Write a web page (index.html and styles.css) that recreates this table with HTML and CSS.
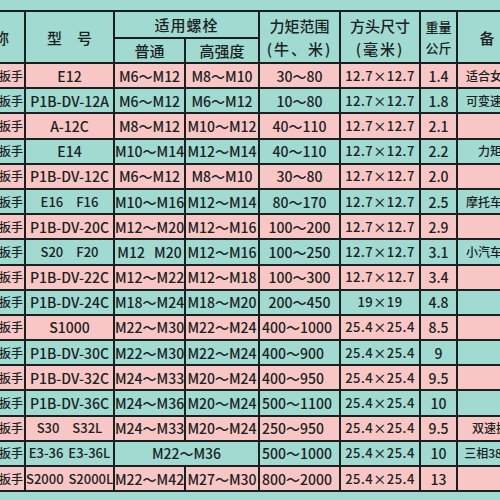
FILE: index.html
```
<!DOCTYPE html>
<html lang="zh-CN">
  <head>
    <meta charset="UTF-8" />
    <meta name="viewport" content="width=device-width, initial-scale=1.0" />
    <title>电动扳手参数表</title>
    <link rel="stylesheet" href="styles.css">
  </head>
  <body>
    <table class="spec-table">
      <colgroup>
        <col class="c-name" />
        <col class="c-model" />
        <col class="c-bolt" />
        <col class="c-bolt2" />
        <col class="c-torque" />
        <col class="c-square" />
        <col class="c-weight" />
        <col class="c-note" />
      </colgroup>
      <thead>
        <tr class="head-top">
          <th rowspan="2">名称</th>
          <th rowspan="2">型　号</th>
          <th colspan="2" class="wide">适用螺栓</th>
          <th rowspan="2">力矩范围<br /><span class="unit">(牛、米)</span></th>
          <th rowspan="2">方头尺寸<br /><span class="unit">(毫米)</span></th>
          <th rowspan="2" class="small">重量<br />公斤</th>
          <th rowspan="2">备　注</th>
        </tr>
        <tr class="head-sub">
          <th>普通</th>
          <th>高强度</th>
        </tr>
      </thead>
      <tbody>
        <tr class="pink">
          <td class="name">电动扳手</td><td>E12</td><td>M6～M12</td><td>M8～M10</td>
          <td>30～80</td><td class="sq">12.7×12.7</td><td>1.4</td><td class="note">适合女士使用</td>
        </tr>
        <tr class="teal">
          <td class="name">电动扳手</td><td>P1B-DV-12A</td><td>M6～M12</td><td>M6～M12</td>
          <td>10～80</td><td class="sq">12.7×12.7</td><td>1.8</td><td class="note">可变速手动型</td>
        </tr>
        <tr class="pink">
          <td class="name">电动扳手</td><td>A-12C</td><td>M8～M12</td><td>M10～M12</td>
          <td>40～110</td><td class="sq">12.7×12.7</td><td>2.1</td><td class="note"></td>
        </tr>
        <tr class="teal">
          <td class="name">电动扳手</td><td>E14</td><td>M10～M14</td><td>M12～M14</td>
          <td>40～110</td><td class="sq">12.7×12.7</td><td>2.2</td><td class="note">力矩可调</td>
        </tr>
        <tr class="pink">
          <td class="name">电动扳手</td><td>P1B-DV-12C</td><td>M6～M12</td><td>M8～M10</td>
          <td>30～80</td><td class="sq">12.7×12.7</td><td>2.0</td><td class="note"></td>
        </tr>
        <tr class="teal">
          <td class="name">电动扳手</td><td class="pair">E16　F16</td><td>M10～M16</td><td>M12～M14</td>
          <td>80～170</td><td class="sq">12.7×12.7</td><td>2.5</td><td class="note">摩托车维修用</td>
        </tr>
        <tr class="pink">
          <td class="name">电动扳手</td><td>P1B-DV-20C</td><td>M12～M20</td><td>M12～M16</td>
          <td>100～200</td><td class="sq">12.7×12.7</td><td>2.9</td><td class="note"></td>
        </tr>
        <tr class="teal">
          <td class="name">电动扳手</td><td class="pair">S20　F20</td><td class="gap">M12 M20</td><td>M12～M16</td>
          <td>100～250</td><td class="sq">12.7×12.7</td><td>3.1</td><td class="note">小汽车维修用</td>
        </tr>
        <tr class="pink">
          <td class="name">电动扳手</td><td>P1B-DV-22C</td><td>M12～M22</td><td>M12～M18</td>
          <td>100～300</td><td class="sq">12.7×12.7</td><td>3.4</td><td class="note"></td>
        </tr>
        <tr class="teal">
          <td class="name">电动扳手</td><td>P1B-DV-24C</td><td>M18～M24</td><td>M18～M20</td>
          <td>200～450</td><td class="sq">19×19</td><td>4.8</td><td class="note"></td>
        </tr>
        <tr class="pink">
          <td class="name">电动扳手</td><td>S1000</td><td>M22～M30</td><td>M22～M24</td>
          <td class="left">400～1000</td><td class="sq">25.4×25.4</td><td>8.5</td><td class="note"></td>
        </tr>
        <tr class="teal">
          <td class="name">电动扳手</td><td>P1B-DV-30C</td><td>M22～M30</td><td>M22～M24</td>
          <td class="left">400～900</td><td class="sq">25.4×25.4</td><td>9</td><td class="note"></td>
        </tr>
        <tr class="pink">
          <td class="name">电动扳手</td><td>P1B-DV-32C</td><td>M24～M33</td><td>M20～M24</td>
          <td class="left">400～950</td><td class="sq">25.4×25.4</td><td>9.5</td><td class="note"></td>
        </tr>
        <tr class="teal">
          <td class="name">电动扳手</td><td>P1B-DV-36C</td><td>M24～M36</td><td>M20～M24</td>
          <td class="left">500～1100</td><td class="sq">25.4×25.4</td><td>10</td><td class="note"></td>
        </tr>
        <tr class="pink">
          <td class="name">电动扳手</td><td class="pair">S30　S32L</td><td>M24～M33</td><td>M20～M24</td>
          <td class="left">250～950</td><td class="sq">25.4×25.4</td><td>9.5</td><td class="note">双速扳手机</td>
        </tr>
        <tr class="teal">
          <td class="name">电动扳手</td><td class="pair">E3-36 E3-36L</td><td colspan="2">M22～M36</td>
          <td class="left">500～1000</td><td class="sq">25.4×25.4</td><td>10</td><td class="note">三相380V电源</td>
        </tr>
        <tr class="pink">
          <td class="name">电动扳手</td><td class="pair">S2000 S2000L</td><td>M22～M42</td><td>M27～M30</td>
          <td class="left">800～2000</td><td class="sq">25.4×25.4</td><td>13</td><td class="note"></td>
        </tr>
      </tbody>
    </table>
  </body>
</html>
```

FILE: styles.css
```
body {
  margin: 0;
  padding: 10px 0;
  background: #a0dad1;
  font-family: "Noto Sans CJK SC", "DejaVu Sans", sans-serif;
  color: #1a2222;
  overflow: hidden;
}

.spec-table {
  border-collapse: collapse;
  table-layout: fixed;
  width: 584px;
  margin-left: -38px;
}

.c-name { width: 62px; }
.c-model { width: 89px; }
.c-bolt { width: 71px; }
.c-bolt2 { width: 74px; }
.c-torque { width: 81px; }
.c-square { width: 80px; }
.c-weight { width: 37px; }
.c-note { width: 90px; }

.spec-table th,
.spec-table td {
  border: 2px solid #1a1f1f;
  padding: 0;
  text-align: center;
  white-space: nowrap;
  overflow: hidden;
  font-weight: 500;
}

.spec-table th {
  background: #a0dad1;
  font-size: 15px;
  line-height: 23px;
}

.spec-table th.wide {
  letter-spacing: 1px;
}

.spec-table th .unit {
  letter-spacing: 2px;
}

.spec-table th.small {
  font-size: 13px;
  line-height: 21px;
}

.head-top {
  height: 27px;
}

.head-sub {
  height: 25px;
}

.spec-table tbody tr {
  height: 25.2px;
}

.spec-table td {
  font-size: 14px;
  line-height: 16px;
  letter-spacing: 0;
}

.pink td {
  background: #f8c6c4;
}

.teal td {
  background: #a0dad1;
}

.spec-table td.name {
  text-align: right;
  padding-right: 1px;
  font-size: 12px;
}

.spec-table td.pair {
  word-spacing: 2px;
  font-size: 13px;
}

.spec-table td.gap {
  word-spacing: 6px;
}

.spec-table td.sq {
  font-size: 13px;
  letter-spacing: 0.5px;
}

.spec-table td.left {
  text-align: left;
  padding-left: 2px;
}

.spec-table td.note {
  font-size: 12px;
  overflow: visible;
}
```
